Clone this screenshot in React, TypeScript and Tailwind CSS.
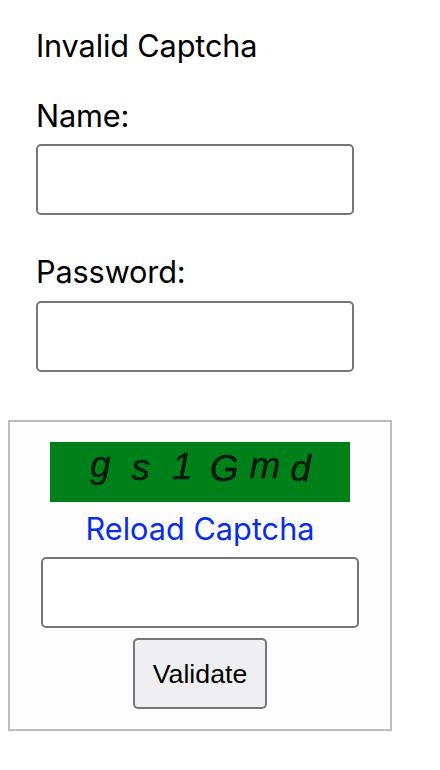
export default function App() {
  const font = "font-['Inter','Liberation_Sans',sans-serif]";
  const field = "block w-[318px] h-[71px] bg-white border-2 border-[#767676] rounded-[5px]";
  const letters = [
    ["g", "mt-[-7px]"],
    ["s", "mt-[-4px] ml-[21px]"],
    ["1", "mt-[-5px] ml-[22px]"],
    ["G", "mt-[-3px] ml-[17px]"],
    ["m", "mt-[-6px] ml-[11px]"],
    ["d", "mt-[-3px] ml-[10px]"],
  ];
  return (
    <div className={`w-[440px] h-[770px] bg-white text-black overflow-hidden text-[30.7px] leading-[36px] tracking-[-0.15px] ${font}`}>
      <div className="px-[36px] pt-[28px]">
        <p className="h-[36px]">Invalid Captcha</p>
        <label className="block mt-[34px] h-[36px]">Name:</label>
        <input className={`${field} mt-[10px]`} />
        <label className="block mt-[39px] h-[36px]">Password:</label>
        <input className={`${field} mt-[11px]`} />
      </div>
      <div className="ml-[8px] mt-[48px] w-[384px] h-[311px] border-2 border-[#bdbdbd] bg-[#fdfdfd] flex flex-col items-center pt-[20px]">
        <div className="w-[300px] h-[60px] bg-[#008019] flex items-start pl-[40px] font-['Liberation_Sans',sans-serif] italic text-[37px] leading-[60px] tracking-normal text-[#061a06] [-webkit-text-stroke:0.5px_#061a06]">
          {letters.map(([c, m]) => (
            <span key={c} className={`${m} blur-[0.4px]`}>{c}</span>
          ))}
        </div>
        <a className="mt-[9px] h-[36px] text-[#0a2ee6] tracking-[0px]">Reload Captcha</a>
        <input className={`${field} mt-[10px]`} />
        <button className="mt-[10px] w-[134px] h-[71px] bg-[#efeff1] border-2 border-[#767676] rounded-[5px] text-[26.7px] font-['Liberation_Sans',sans-serif] tracking-normal">
          Validate
        </button>
      </div>
    </div>
  );
}
